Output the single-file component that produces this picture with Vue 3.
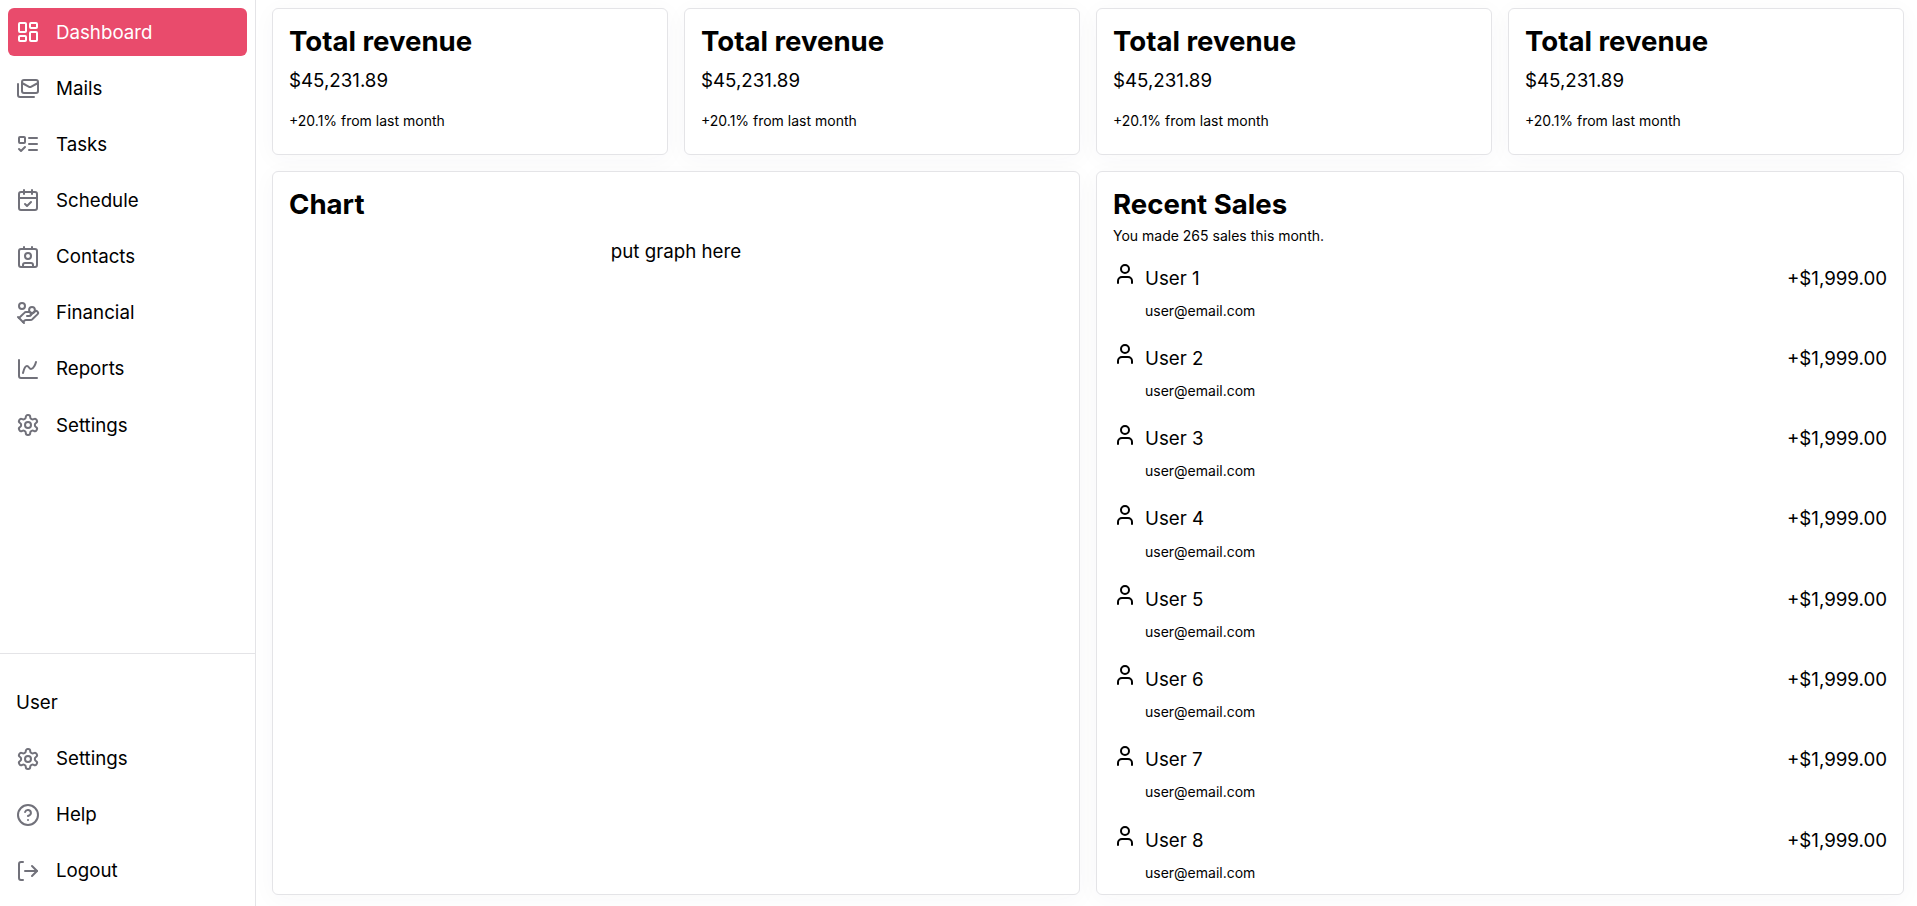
<script setup>
const icons = {
  dashboard: '<rect width="7" height="9" x="3" y="3" rx="1"/><rect width="7" height="5" x="14" y="3" rx="1"/><rect width="7" height="9" x="14" y="12" rx="1"/><rect width="7" height="5" x="3" y="16" rx="1"/>',
  mails: '<rect width="16" height="13" x="6" y="4" rx="2"/><path d="m22 7-7.1 3.78c-.57.3-1.23.3-1.8 0L6 7"/><path d="M2 8v11c0 1.1.9 2 2 2h14"/>',
  tasks: '<rect x="3" y="5" width="6" height="6" rx="1"/><path d="m3 17 2 2 4-4"/><path d="M13 6h8"/><path d="M13 12h8"/><path d="M13 18h8"/>',
  schedule: '<path d="M8 2v4"/><path d="M16 2v4"/><rect width="18" height="18" x="3" y="4" rx="2"/><path d="M3 10h18"/><path d="m9 16 2 2 4-4"/>',
  contacts: '<path d="M16 2v2"/><path d="M7 22v-2a2 2 0 0 1 2-2h6a2 2 0 0 1 2 2v2"/><path d="M8 2v2"/><circle cx="12" cy="11" r="3"/><rect x="3" y="4" width="18" height="18" rx="2"/>',
  financial: '<path d="M11 15h2a2 2 0 1 0 0-4h-3c-.6 0-1.1.2-1.4.6L3 17"/><path d="m7 21 1.6-1.4c.3-.4.8-.6 1.4-.6h4c1.1 0 2.1-.4 2.8-1.2l4.6-4.4a2 2 0 0 0-2.75-2.91l-4.2 3.9"/><path d="m2 16 6 6"/><circle cx="16" cy="9" r="2.9"/><circle cx="6" cy="5" r="3"/>',
  reports: '<path d="M3 3v16a2 2 0 0 0 2 2h16"/><path d="M7 16c.5-2 1.5-7 4-7 2 0 2 3 4 3 2.500 0 4.500-5 5-7"/>',
  settings: '<path d="M12.220 2h-.44a2 2 0 0 0-2 2v.18a2 2 0 0 1-1 1.730l-.43.25a2 2 0 0 1-2 0l-.15-.08a2 2 0 0 0-2.730.73l-.22.38a2 2 0 0 0 .73 2.730l.15.1a2 2 0 0 1 1 1.720v.51a2 2 0 0 1-1 1.740l-.15.09a2 2 0 0 0-.73 2.730l.22.38a2 2 0 0 0 2.730.73l.15-.08a2 2 0 0 1 2 0l.43.25a2 2 0 0 1 1 1.730V20a2 2 0 0 0 2 2h.44a2 2 0 0 0 2-2v-.18a2 2 0 0 1 1-1.730l.43-.25a2 2 0 0 1 2 0l.15.08a2 2 0 0 0 2.730-.73l.22-.39a2 2 0 0 0-.73-2.730l-.15-.08a2 2 0 0 1-1-1.740v-.5a2 2 0 0 1 1-1.740l.15-.09a2 2 0 0 0 .73-2.730l-.22-.38a2 2 0 0 0-2.730-.73l-.15.08a2 2 0 0 1-2 0l-.43-.25a2 2 0 0 1-1-1.730V4a2 2 0 0 0-2-2z"/><circle cx="12" cy="12" r="3"/>',
  help: '<circle cx="12" cy="12" r="10"/><path d="M9.090 9a3 3 0 0 1 5.830 1c0 2-3 3-3 3"/><path d="M12 17h.01"/>',
  logout: '<path d="m16 17 5-5-5-5"/><path d="M21 12H9"/><path d="M7 21H5a2 2 0 0 1-2-2V5a2 2 0 0 1 2-2h2"/>',
  user: '<path d="M19 21v-2a4 4 0 0 0-4-4H9a4 4 0 0 0-4 4v2"/><circle cx="12" cy="7" r="4"/>',
}

const mainLinks = [
  { label: 'Dashboard', icon: 'dashboard', active: true },
  { label: 'Mails', icon: 'mails' },
  { label: 'Tasks', icon: 'tasks' },
  { label: 'Schedule', icon: 'schedule' },
  { label: 'Contacts', icon: 'contacts' },
  { label: 'Financial', icon: 'financial' },
  { label: 'Reports', icon: 'reports' },
  { label: 'Settings', icon: 'settings' },
]

const userLinks = [
  { label: 'Settings', icon: 'settings' },
  { label: 'Help', icon: 'help' },
  { label: 'Logout', icon: 'logout' },
]
</script>

<template>
  <div class="layout">
    <aside class="sidebar">
      <nav class="links">
        <a v-for="link in mainLinks" :key="link.label" class="link" :class="{ active: link.active }">
          <svg class="icon" viewBox="0 0 24 24" v-html="icons[link.icon]"></svg>
          <span>{{ link.label }}</span>
        </a>
      </nav>
      <div class="account">
        <div class="link account-name"><span>User</span></div>
        <a v-for="link in userLinks" :key="link.label" class="link">
          <svg class="icon" viewBox="0 0 24 24" v-html="icons[link.icon]"></svg>
          <span>{{ link.label }}</span>
        </a>
      </div>
    </aside>

    <main class="content">
      <section v-for="n in 4" :key="n" class="card stat">
        <h2>Total revenue</h2>
        <p class="amount">$45,231.89</p>
        <p class="small">+20.1% from last month</p>
      </section>

      <section class="card wide">
        <h2>Chart</h2>
        <p class="graph">put graph here</p>
      </section>

      <section class="card wide">
        <h2>Recent Sales</h2>
        <p class="small subtitle">You made 265 sales this month.</p>
        <ul class="sales">
          <li v-for="n in 8" :key="n" class="sale">
            <svg class="icon" viewBox="0 0 24 24" v-html="icons.user"></svg>
            <div class="person">
              <p class="name">User {{ n }}</p>
              <p class="small">user@email.com</p>
            </div>
            <span class="price">+$1,999.00</span>
          </li>
        </ul>
      </section>
    </main>
  </div>
</template>

<style>
body {
  margin: 0;
  background: #fff;
  overflow: hidden;
}
</style>

<style scoped>
.layout {
  display: flex;
  height: 906px;
  box-sizing: border-box;
  font-family: Inter, 'Liberation Sans', sans-serif;
  font-size: 18.72px;
  line-height: 28.08px;
  color: #000;
}
.layout * {
  box-sizing: border-box;
}
h2,
p,
ul {
  margin: 0;
  padding: 0;
}
.sidebar {
  position: relative;
  z-index: 1;
  display: flex;
  flex-direction: column;
  justify-content: space-between;
  flex: none;
  width: 256px;
  background: #fff;
  border-right: 1px solid #e4e4e7;
}
.links,
.account {
  display: flex;
  flex-direction: column;
  gap: 8px;
  padding: 8px;
}
.account {
  height: 253px;
  padding-top: 25px;
  border-top: 1px solid #e4e4e7;
}
.link {
  display: flex;
  align-items: center;
  gap: 16px;
  height: 48.08px;
  padding: 0 8px;
  border-radius: 6px;
}
.links .link {
  height: 48.15px;
}
.links .link span {
  padding-top: 1.1px;
}
.link .icon {
  color: #71717a;
}
.active,
.active .icon {
  color: #fff;
}
.active {
  background: #e94b6c;
}
.icon {
  flex: none;
  width: 24px;
  height: 24px;
  fill: none;
  stroke: currentColor;
  stroke-width: 2;
  stroke-linecap: round;
  stroke-linejoin: round;
}
.content {
  display: grid;
  flex: 1;
  grid-template-columns: repeat(4, 1fr);
  grid-template-rows: 147px 724px;
  gap: 16px;
  padding: 8px 13px 11px 16px;
}
.card {
  padding: 16px;
  background: #fff;
  border: 1px solid #e4e4e7;
  border-radius: 6px;
  box-shadow: 0 4px 24px rgba(60, 60, 90, 0.035);
}
.wide {
  grid-column: span 2;
}
h2 {
  font-size: 27.6px;
  font-weight: 700;
  line-height: 33px;
}
.amount {
  margin-top: 9px;
}
.small {
  font-size: 14px;
  line-height: 20px;
}
.stat .small {
  margin-top: 16px;
}
.graph {
  margin-top: 17px;
  text-align: center;
}
.subtitle {
  margin-top: 5px;
}
.sales {
  margin-top: 16px;
  list-style: none;
}
.sale {
  display: flex;
  align-items: flex-start;
  height: 80.28px;
}
.sale .icon {
  margin: 0 8px 0 0;
}
.person {
  flex: 1;
  padding-top: 2.65px;
}
.person .small {
  margin-top: 8.18px;
}
.price {
  padding-top: 2.65px;
}
</style>
